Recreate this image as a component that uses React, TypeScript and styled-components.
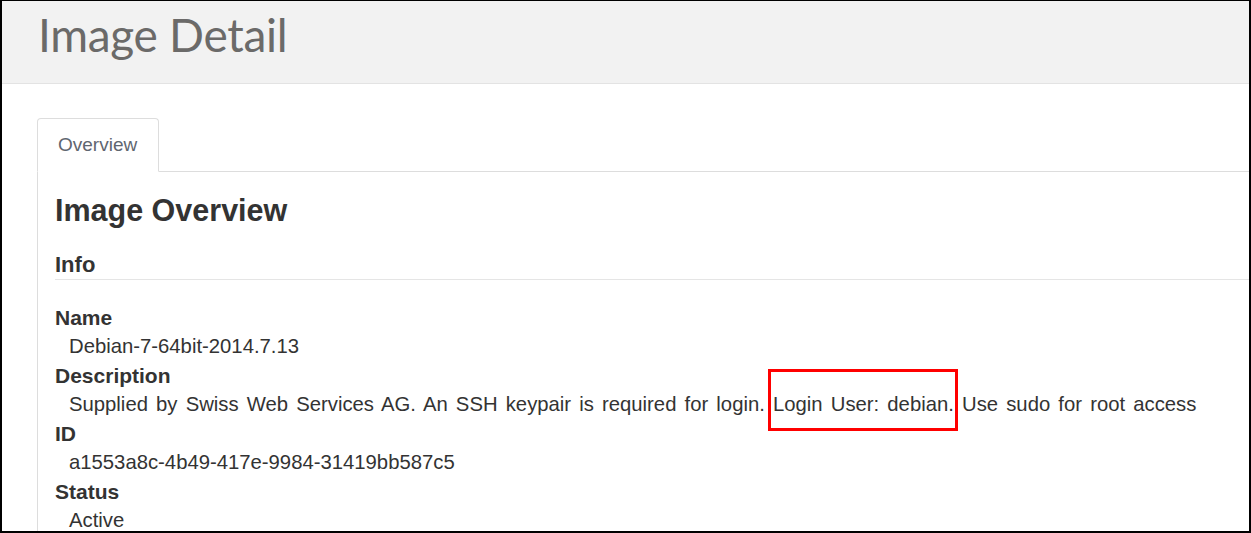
import React from "react";
import styled, { createGlobalStyle } from "styled-components";

const Global = createGlobalStyle`
  html, body { margin: 0; padding: 0; background: #fff; }
  * { box-sizing: border-box; }
`;

const Frame = styled.div`
  width: 1251px;
  height: 533px;
  border-style: solid;
  border-color: #000;
  border-width: 1px 2px 2px 2px;
  overflow: hidden;
  background: #fff;
  display: flex;
  flex-direction: column;
`;

const Header = styled.header`
  height: 83px;
  flex: none;
  background: #f2f2f2;
  border-bottom: 1px solid #e3e3e3;
  padding-left: 36px;
  display: flex;
  align-items: flex-start;
`;

const Title = styled.h1`
  margin: 0;
  padding-top: 5px;
  font-family: Lato, "Open Sans", sans-serif;
  font-weight: 400;
  font-size: 46px;
  letter-spacing: -0.3px;
  line-height: 58px;
  color: #6b6a69;
`;

const Content = styled.main`
  padding: 34px 0 0 35px;
  flex: 1;
  display: flex;
  flex-direction: column;
`;

const TabList = styled.nav`
  display: flex;
  border-bottom: 1px solid #dddddd;
`;

const Tab = styled.div`
  width: 122px;
  height: 54px;
  margin-bottom: -1px;
  border: 1px solid #dddddd;
  border-bottom-color: #fff;
  border-radius: 4px 4px 0 0;
  background: #fff;
  padding-left: 20px;
  display: flex;
  align-items: center;
  font-family: "Liberation Sans", Arial, sans-serif;
  font-size: 19px;
  color: #5f6670;
`;

const Panel = styled.section`
  flex: 1;
  border-left: 1px solid #dddddd;
  padding: 20px 0 0 17px;
  font-family: "Liberation Sans", Arial, sans-serif;
  color: #333;
`;

const H3 = styled.h3`
  margin: 0;
  font-size: 30.5px;
  line-height: 36px;
  font-weight: 700;
  color: #333;
`;

const H4 = styled.h4`
  margin: 24px 0 0;
  font-size: 22px;
  line-height: 26px;
  padding-bottom: 1px;
  font-weight: 700;
  color: #333;
  border-bottom: 1px solid #e5e5e5;
`;

const DL = styled.dl`
  margin: 23px 0 0;
  font-size: 20.3px;
  line-height: 29px;
`;

const DT = styled.dt`
  font-weight: 700;
  font-size: 21px;
`;

const DD = styled.dd`
  margin: 0 0 0 14px;
  white-space: nowrap;
  word-spacing: 2.5px;
`;

const Marked = styled.span`
  position: relative;
  &::after {
    content: "";
    position: absolute;
    left: -5px;
    right: -4px;
    top: -24px;
    bottom: -16px;
    border: 3px solid #ff0000;
    pointer-events: none;
  }
`;

export default function App() {
  return (
    <>
      <Global />
      <Frame>
        <Header>
          <Title>Image Detail</Title>
        </Header>
        <Content>
          <TabList>
            <Tab>Overview</Tab>
          </TabList>
          <Panel>
            <H3>Image Overview</H3>
            <H4>Info</H4>
            <DL>
              <DT>Name</DT>
              <DD>Debian-7-64bit-2014.7.13</DD>
              <DT>Description</DT>
              <DD>
                Supplied by Swiss Web Services AG. An SSH keypair is required for login.{" "}
                <Marked>Login User: debian.</Marked> Use sudo for root access
              </DD>
              <DT>ID</DT>
              <DD>a1553a8c-4b49-417e-9984-31419bb587c5</DD>
              <DT>Status</DT>
              <DD>Active</DD>
            </DL>
          </Panel>
        </Content>
      </Frame>
    </>
  );
}
